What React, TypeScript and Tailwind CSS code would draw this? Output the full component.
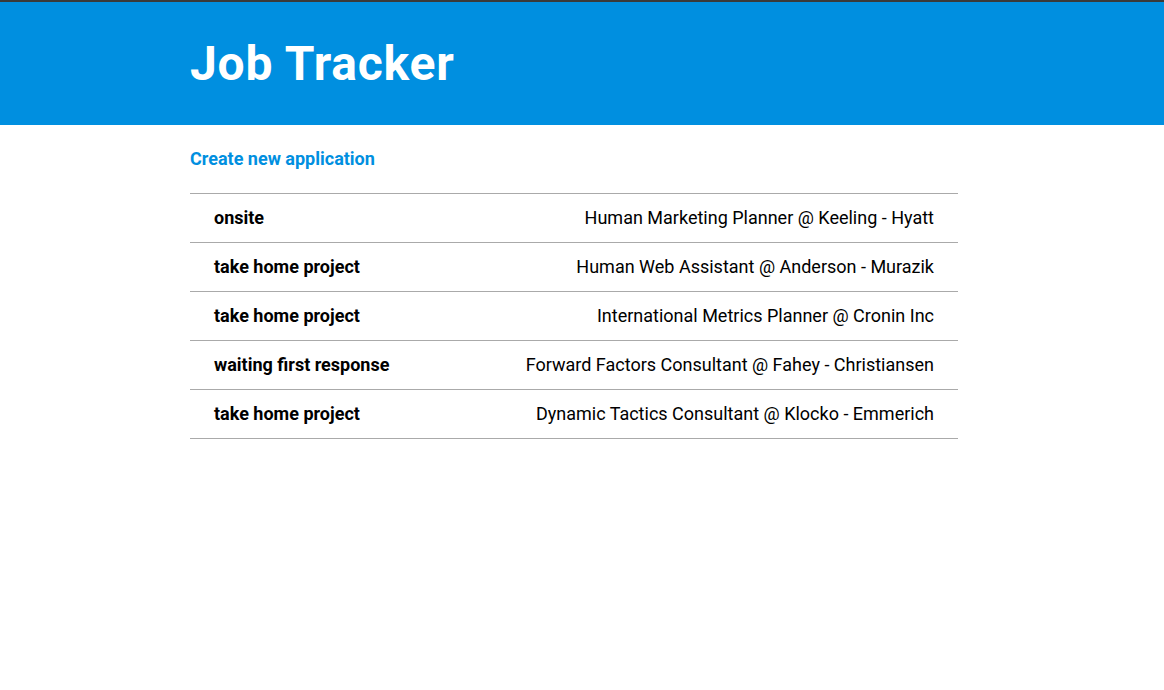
import React from 'react';

const apps = [
  { status: 'onsite', title: 'Human Marketing Planner @ Keeling - Hyatt' },
  { status: 'take home project', title: 'Human Web Assistant @ Anderson - Murazik' },
  { status: 'take home project', title: 'International Metrics Planner @ Cronin Inc' },
  { status: 'waiting first response', title: 'Forward Factors Consultant @ Fahey - Christiansen' },
  { status: 'take home project', title: 'Dynamic Tactics Consultant @ Klocko - Emmerich' },
];

export default function App() {
  return (
    <div className="min-h-screen bg-white font-['Roboto',sans-serif] text-black">
      <header className="h-[125px] bg-[#008fe0] border-t-2 border-[#3a3a3a]">
        <div className="w-[768px] mx-[190px] pt-[32px]">
          <h1 className="text-[48px] font-bold text-white leading-[60px] tracking-[0.8px]">Job Tracker</h1>
        </div>
      </header>
      <main className="w-[768px] ml-[190px]">
        <a href="#" className="block mt-[21px] text-[18px] leading-[26px] font-bold text-[#008fe0]">
          Create new application
        </a>
        <ul className="mt-[21px] border-t border-[#aaaaaa]">
          {apps.map((a, i) => (
            <li key={i} className="h-[49px] pb-[2px] flex items-center justify-between px-[24px] border-b border-[#aaaaaa] text-[18px]">
              <span className="font-bold">{a.status}</span>
              <span>{a.title}</span>
            </li>
          ))}
        </ul>
      </main>
    </div>
  );
}
